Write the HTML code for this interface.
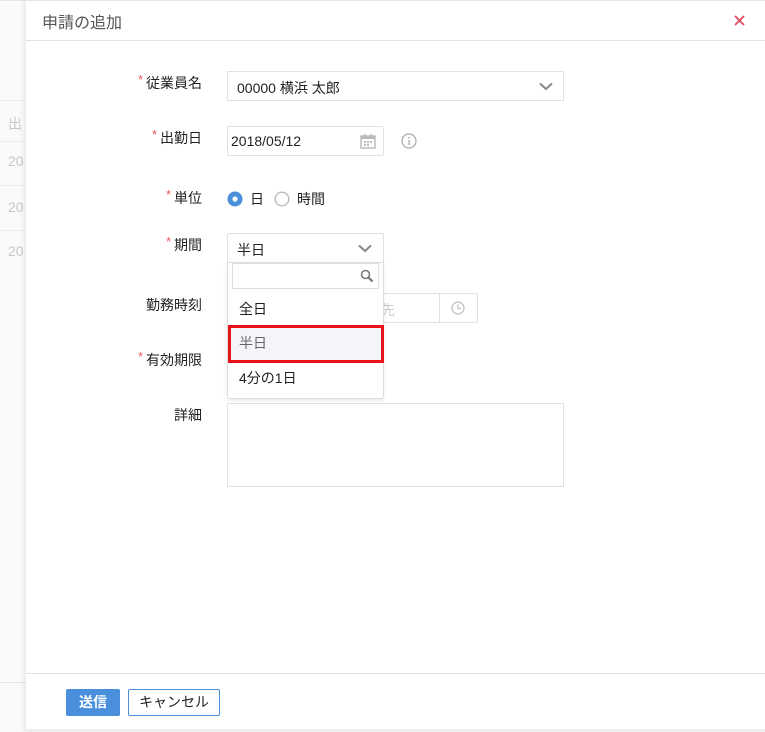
<!DOCTYPE html>
<html><head><meta charset="utf-8"><style>
*{box-sizing:border-box;margin:0;padding:0}
body{width:765px;height:732px;position:relative;overflow:hidden;background:#fff;font-family:"Liberation Sans","Noto Sans CJK JP",sans-serif;font-size:14px;color:#222}
.abs{position:absolute}
.bg{left:0;top:0;width:26px;height:732px;background:#fafafa;color:#c8c8c8;font-size:14px}
.modal{left:26px;top:0;width:739px;height:732px;background:#fff;box-shadow:-2px 0 6px rgba(0,0,0,.08)}
.lbl{width:120px;text-align:right;left:82px;font-size:14px;color:#222}
.req{color:#e85a5a;font-size:13px;position:relative;top:-4px;margin-right:3px}
.box{border:1px solid #e2e2e2;background:#fff}
</style></head><body>
<div class="abs bg">
 <div class="abs" style="top:0;left:0;width:26px;height:1px;background:#e5e5e5"></div>
 <div class="abs" style="top:100px;left:0;width:26px;height:1px;background:#ececec"></div>
 <div class="abs" style="top:114px;left:8px">出</div>
 <div class="abs" style="top:141px;left:0;width:26px;height:1px;background:#ececec"></div>
 <div class="abs" style="top:153px;left:8px">20</div>
 <div class="abs" style="top:185px;left:0;width:26px;height:1px;background:#ececec"></div>
 <div class="abs" style="top:199px;left:8px">20</div>
 <div class="abs" style="top:230px;left:0;width:26px;height:1px;background:#ececec"></div>
 <div class="abs" style="top:243px;left:8px">20</div>
 <div class="abs" style="top:682px;left:0;width:26px;height:1px;background:#e5e5e5"></div>
</div>
<div class="abs modal"></div>
<div class="abs" style="left:26px;top:0;width:739px;height:1px;background:#e6e6e6"></div>
<div class="abs" style="left:42px;top:9px;font-size:16px;color:#555">申請の追加</div>
<svg class="abs" style="left:734px;top:15px" width="11" height="11"><path d="M1 1L10 10M10 1L1 10" stroke="#e8475f" stroke-width="1.8"/></svg>
<div class="abs" style="left:26px;top:40px;width:739px;height:1px;background:#e2e2e2"></div>

<div class="abs lbl" style="top:73px"><span class="req">*</span>従業員名</div>
<div class="abs box" style="left:227px;top:71px;width:337px;height:30px"><span class="abs" style="left:9px;top:6px">00000 横浜 太郎</span>
<svg class="abs" style="left:311px;top:10px" width="14" height="9"><path d="M1 1.5L7 7L13 1.5" stroke="#888" stroke-width="2" fill="none"/></svg></div>

<div class="abs lbl" style="top:128px"><span class="req">*</span>出勤日</div>
<div class="abs box" style="left:227px;top:126px;width:157px;height:30px;border-radius:2px"><span class="abs" style="left:3px;top:6px;font-size:14px">2018/05/12</span>
<svg class="abs" style="left:132px;top:7px" width="16" height="15"><rect x="1" y="2" width="14" height="12" fill="none" stroke="#bbb" stroke-width="1.5"/><rect x="1" y="2" width="14" height="3" fill="#bbb"/><rect x="4" y="0" width="1.5" height="3" fill="#bbb"/><rect x="10.5" y="0" width="1.5" height="3" fill="#bbb"/><g fill="#bbb"><rect x="4" y="7" width="2" height="2"/><rect x="7" y="7" width="2" height="2"/><rect x="10" y="7" width="2" height="2"/><rect x="4" y="10" width="2" height="2"/><rect x="7" y="10" width="2" height="2"/></g></svg></div>
<svg class="abs" style="left:401px;top:133px" width="16" height="16"><circle cx="8" cy="8" r="7" fill="none" stroke="#aaa" stroke-width="1.2"/><rect x="7.4" y="7" width="1.3" height="5" fill="#aaa"/><circle cx="8" cy="4.6" r=".9" fill="#aaa"/></svg>

<div class="abs lbl" style="top:188px"><span class="req">*</span>単位</div>
<svg class="abs" style="left:227px;top:191px" width="16" height="16"><circle cx="8" cy="8" r="7.5" fill="#4a8fdb"/><circle cx="8" cy="8" r="2.6" fill="#fff"/></svg>
<div class="abs" style="left:250px;top:189px">日</div>
<svg class="abs" style="left:274px;top:191px" width="16" height="16"><circle cx="8" cy="8" r="6.8" fill="#fff" stroke="#bbb" stroke-width="1.4"/></svg>
<div class="abs" style="left:297px;top:189px">時間</div>

<div class="abs lbl" style="top:235px"><span class="req">*</span>期間</div>
<div class="abs box" style="left:227px;top:233px;width:157px;height:30px;border-radius:2px 2px 0 0"><span class="abs" style="left:9px;top:6px">半日</span>
<svg class="abs" style="left:130px;top:10px" width="14" height="9"><path d="M1 1.5L7 7L13 1.5" stroke="#888" stroke-width="2" fill="none"/></svg></div>

<div class="abs lbl" style="top:295px">勤務時刻</div>
<div class="abs box" style="left:370px;top:293px;width:108px;height:30px;border-radius:2px"><span class="abs" style="left:10px;top:6px;color:#ccc">先</span>
<div class="abs" style="left:68px;top:0;width:1px;height:28px;background:#e2e2e2"></div>
<svg class="abs" style="left:80px;top:7px" width="14" height="14"><circle cx="7" cy="7" r="6" fill="none" stroke="#bbb" stroke-width="1.2"/><path d="M7 3.5V7.5H10" stroke="#bbb" stroke-width="1.2" fill="none"/></svg></div>

<div class="abs lbl" style="top:350px"><span class="req">*</span>有効期限</div>

<div class="abs box" style="left:227px;top:262px;width:157px;height:137px;border-color:#ddd;border-radius:0 0 3px 3px;box-shadow:0 2px 4px rgba(0,0,0,.08)">
 <div class="abs box" style="left:4px;top:0;width:147px;height:26px;border-color:#ddd">
 <svg class="abs" style="left:127px;top:5px" width="14" height="14"><circle cx="5.5" cy="5.5" r="4" fill="none" stroke="#777" stroke-width="1.6"/><path d="M8.5 8.5L12.5 12.5" stroke="#777" stroke-width="2.2"/></svg></div>
 <div class="abs" style="left:11px;top:36px">全日</div>
 <div class="abs" style="left:0;top:62px;width:156px;height:38px;background:#f4f5f9;border:3px solid #e8141c"></div>
 <div class="abs" style="left:11px;top:70px;color:#666">半日</div>
 <div class="abs" style="left:11px;top:105px">4分の1日</div>
</div>

<div class="abs lbl" style="top:405px">詳細</div>
<div class="abs box" style="left:227px;top:403px;width:337px;height:84px"></div>

<div class="abs" style="left:26px;top:673px;width:739px;height:1px;background:#e2e2e2"></div>
<div class="abs" style="left:66px;top:689px;width:54px;height:27px;background:#4a8fdb;color:#fff;font-weight:bold;text-align:center;line-height:26px;border-radius:2px">送信</div>
<div class="abs" style="left:128px;top:689px;width:92px;height:27px;border:1px solid #4a8fdb;text-align:center;line-height:24px;border-radius:2px">キャンセル</div>
<div class="abs" style="left:26px;top:729px;width:739px;height:3px;background:#eee"></div>
</body></html>
